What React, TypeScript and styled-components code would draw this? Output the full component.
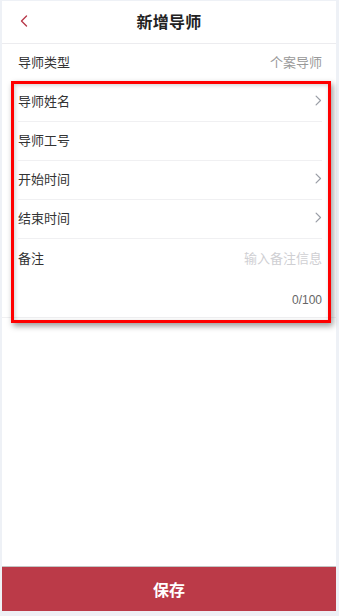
import React from 'react';
import styled, { createGlobalStyle } from 'styled-components';

const GlobalStyle = createGlobalStyle`
  html, body {
    margin: 0;
    padding: 0;
    background: #eef1f6;
  }
  body {
    font-family: "Noto Sans CJK SC", "Noto Sans", sans-serif;
  }
`;

const rows = [
  { label: '导师姓名', arrow: true },
  { label: '导师工号', arrow: false },
  { label: '开始时间', arrow: true },
  { label: '结束时间', arrow: true },
];

const Chevron = ({ color = '#9a9ea6', size = 11 }) => (
  <svg width={size * 0.6} height={size} viewBox="0 0 6 10" fill="none">
    <polyline points="1,1 5,5 1,9" stroke={color} strokeWidth="1.1" strokeLinecap="round" strokeLinejoin="round" />
  </svg>
);

const App = () => {
  return (
    <>
      <GlobalStyle />
      <Frame>
        <Header>
          <BackButton>
            <svg width="8" height="12" viewBox="0 0 8 12" fill="none">
              <polyline points="6.5,1 1.5,6 6.5,11" stroke="#b83a4a" strokeWidth="1.4" strokeLinecap="round" strokeLinejoin="round" />
            </svg>
          </BackButton>
          <Title>新增导师</Title>
        </Header>

        <Row>
          <Label>导师类型</Label>
          <Value>个案导师</Value>
        </Row>

        <Group>
          {rows.map((item) => (
            <Row key={item.label} divider>
              <Label>{item.label}</Label>
              {item.arrow && <Chevron />}
            </Row>
          ))}
          <NoteRow>
            <NoteTop>
              <Label>备注</Label>
              <Placeholder>输入备注信息</Placeholder>
            </NoteTop>
            <Counter>0/100</Counter>
          </NoteRow>
          <Highlight />
        </Group>

        <Spacer />
        <SaveButton>保存</SaveButton>
      </Frame>
    </>
  );
};

export default App;

const Frame = styled.div`
  margin: 1px 3px 0 2px;
  height: 610px;
  background: #fff;
  display: flex;
  flex-direction: column;
`;

const Header = styled.div`
  position: relative;
  height: 42px;
  border-bottom: 1px solid #ececef;
  display: flex;
  align-items: center;
  justify-content: center;
  flex-shrink: 0;
`;

const BackButton = styled.div`
  position: absolute;
  left: 18px;
  top: 14px;
  display: flex;
`;

const Title = styled.div`
  font-size: 16px;
  font-weight: 700;
  color: #222;
  letter-spacing: 0.2px;
  padding-bottom: 2px;
`;

const Row = styled.div<{ divider?: boolean }>`
  height: 39px;
  margin: 0 14px 0 16px;
  padding-bottom: 3px;
  display: flex;
  align-items: center;
  justify-content: space-between;
  box-sizing: border-box;
  border-bottom: ${(p) => (p.divider ? '1px solid #f0f0f2' : '1px solid transparent')};
  flex-shrink: 0;
`;

const Label = styled.span`
  font-size: 13px;
  color: #333;
`;

const Value = styled.span`
  font-size: 13px;
  color: #999;
`;

const Group = styled.div`
  position: relative;
  border-bottom: 1px solid #f0f0f2;
`;

const NoteRow = styled.div`
  height: 78px;
  padding: 0 14px 0 16px;
  display: flex;
  flex-direction: column;
`;

const NoteTop = styled.div`
  height: 39px;
  padding-bottom: 3px;
  box-sizing: border-box;
  display: flex;
  align-items: center;
  justify-content: space-between;
`;

const Placeholder = styled.span`
  font-size: 13px;
  color: #cfcfd3;
`;

const Counter = styled.div`
  margin-top: 15px;
  text-align: right;
  font-size: 12px;
  color: #666;
  font-family: "Liberation Sans", "Noto Sans", sans-serif;
`;

const Highlight = styled.div`
  position: absolute;
  top: -2px;
  left: 9px;
  right: 5px;
  bottom: -6px;
  border: 3px solid #ff0000;
  box-shadow: 2px 3px 6px rgba(0, 0, 0, 0.4), inset 1px 1px 4px rgba(0, 0, 0, 0.2);
  pointer-events: none;
`;

const Spacer = styled.div`
  flex: 1;
`;

const SaveButton = styled.div`
  height: 44px;
  flex-shrink: 0;
  border-top: 1px solid #c4c4c4;
  background: #bb3a48;
  color: #fff;
  font-size: 16px;
  font-weight: 700;
  display: flex;
  align-items: center;
  justify-content: center;
`;
